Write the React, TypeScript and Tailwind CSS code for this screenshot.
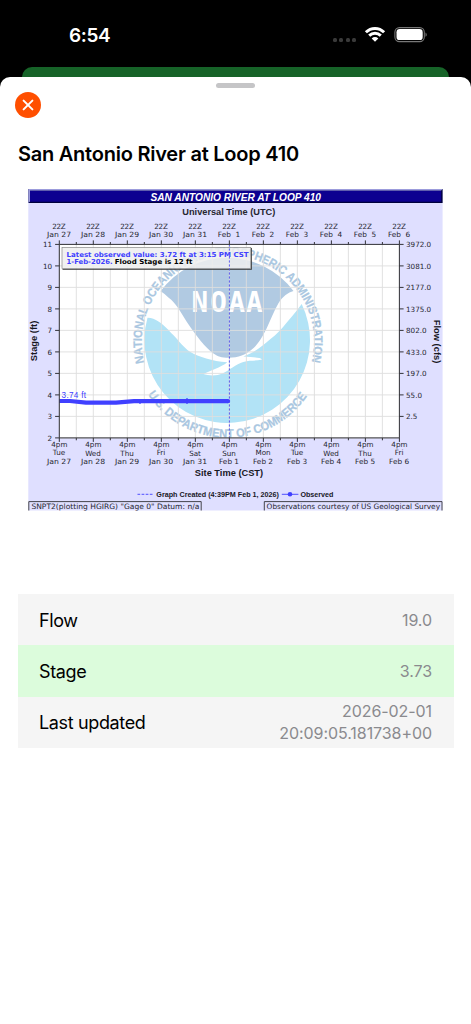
const TOP = 244.4;
const BOTTOM = 437.9;
const LEFT = 59.3;
const DAY = 34.01;
const FOOT = (BOTTOM - TOP) / 9;

const utcDates = ["Jan 27", "Jan 28", "Jan 29", "Jan 30", "Jan 31", "Feb  1", "Feb  2", "Feb  3", "Feb  4", "Feb  5", "Feb  6"];
const cstDates = ["Jan 27", "Jan 28", "Jan 29", "Jan 30", "Jan 31", "Feb 1", "Feb 2", "Feb 3", "Feb 4", "Feb 5", "Feb 6"];
const weekdays = ["Tue", "Wed", "Thu", "Fri", "Sat", "Sun", "Mon", "Tue", "Wed", "Thu", "Fri"];
const stages = [11, 10, 9, 8, 7, 6, 5, 4, 3, 2];
const flows = ["3972.0", "3081.0", "2177.0", "1375.0", "802.0", "433.0", "197.0", "55.0", "2.5"];

const rows = [
  { label: "Flow", value: ["19.0"], className: "bg-[#f5f5f5]" },
  { label: "Stage", value: ["3.73"], className: "bg-[#dcfcdc]" },
  { label: "Last updated", value: ["2026-02-01", "20:09:05.181738+00"], className: "bg-[#f5f5f5]" },
];

function StatusBar() {
  return (
    <div className="flex h-[67px] items-start justify-between pl-[69px] pr-[43px] text-white">
      <span className="mt-[23px] text-[19px] leading-[26px] font-semibold tracking-[-0.4px]">6:54</span>
      <div className="mt-[26px] flex items-start">
        <div className="mt-[12px] mr-[8px] flex gap-[2.4px]">
          {[0, 1, 2, 3].map((dot) => (
            <span key={dot} className="size-[4px] rounded-[1.5px] bg-[#3a3a3a]" />
          ))}
        </div>
        <svg className="mr-[8px] h-[17px] w-[22px]" viewBox="0 0 22 17" fill="none">
          <path d="M1.9 6.2C7.1 1.1 14.9 1.1 20.1 6.2" stroke="white" strokeWidth="3" />
          <path d="M5.2 9.6C8.5 6.4 13.5 6.4 16.8 9.6" stroke="white" strokeWidth="2.9" />
          <path d="M7.7 12.4C9.6 10.6 12.4 10.6 14.3 12.4L11 15.8Z" fill="white" />
        </svg>
        <svg className="h-[17px] w-[34px]" viewBox="0 0 34 17" fill="none">
          <rect x="0.9" y="1.6" width="29.4" height="14" rx="4.6" stroke="#777" strokeWidth="1.1" />
          <rect x="2.5" y="3.1" width="26.2" height="11" rx="3.2" fill="white" />
          <path d="M31.5 6.4C33.2 7.2 33.2 10 31.5 10.8Z" fill="#777" />
        </svg>
      </div>
    </div>
  );
}

function NoaaLogo() {
  return (
    <g>
      <path
        d="M160.5 291.3A82.8 82.8 0 0 1 293.5 291C288 292.5 283 296 278.3 303.5C274 311 271 319 266.7 328.3C262 338 258 344 253.3 348.3C246 355 238 357.8 229 357.8C221 357.6 218 356.5 213.5 353.5C205 347 197 337 186.7 321.7C180 311 175 302 169 298C166 295 163 293 160.5 291.3Z"
        fill="#b1cae2"
      />
      <path
        d="M147.5 317.7C151 317.5 155 319.2 158.5 321.5C166 326.5 168 330 173.3 335C179 341 184 348 190 351.7C199 357 212 361 227.3 362.3C224 365 220 367 215 369C211 371 207 372 203.3 374C209 376 217 376 222.5 373.5C229 370.5 236 364 243.3 362C250 360 256 361.2 262 359.6C261 357.5 254 357.2 243.3 356.4C252 353 257 350 263.3 345C272 338 278 333 283.3 326.7C289 320 295 313 301.7 304A82.8 82.8 0 1 1 147.5 317.7Z"
        fill="#b2e3f6"
      />
      <text x="191.4 210.2 228.6 246" y="312" fontSize="27.6" fill="white" fontFamily="DejaVu Sans Mono, monospace" fontWeight="700">
        NOAA
      </text>
      <path id="ring-top" d="M144.3 362.5A86.2 86.2 0 1 1 311.8 361.5" fill="none" />
      <path id="ring-bottom" d="M147.9 394.3A95.6 95.6 0 0 0 308.2 394.3" fill="none" />
      <g fill="#aac7e1" stroke="#aac7e1" strokeWidth="0.25" fontFamily="Liberation Sans, sans-serif" fontWeight="700" fontSize="12.2">
        <text textLength="312" lengthAdjust="spacingAndGlyphs">
          <textPath href="#ring-top" textLength="312" lengthAdjust="spacingAndGlyphs">NATIONAL OCEANIC AND ATMOSPHERIC ADMINISTRATION</textPath>
        </text>
        <text textLength="188" lengthAdjust="spacingAndGlyphs">
          <textPath href="#ring-bottom" textLength="188" lengthAdjust="spacingAndGlyphs">U.S. DEPARTMENT OF COMMERCE</textPath>
        </text>
      </g>
    </g>
  );
}

function Hydrograph() {
  const halfDays = Array.from({ length: 21 }, (_, i) => LEFT + (i * DAY) / 2);
  return (
    <svg className="ml-[28px] block h-[322px] w-[415px]" viewBox="28 189 415 322" fontFamily="DejaVu Sans, sans-serif" fontSize="7.2" fill="#262630">
      <rect x="28.3" y="189" width="414.3" height="321.5" fill="#dfdfff" />
      <rect x="28.3" y="189" width="414.3" height="14" fill="#00003c" />
      <path d="M28.3 203V189H442.6L441 190.8H30V201.5Z" fill="#9c9cdc" />
      <rect x="30" y="190.8" width="411.2" height="10.9" fill="#0c0090" />
      <text x="150.5" y="200.6" textLength="170.5" lengthAdjust="spacingAndGlyphs" fontSize="10" fontWeight="700" fontStyle="italic" fontFamily="Liberation Sans, sans-serif" fill="white">
        SAN ANTONIO RIVER AT LOOP 410
      </text>
      <text x="182.3" y="214.7" textLength="93" lengthAdjust="spacingAndGlyphs" fontSize="9.3" fontWeight="700" fontFamily="Liberation Sans, sans-serif">
        Universal Time (UTC)
      </text>

      <rect x={LEFT} y={TOP} width={DAY * 10} height={BOTTOM - TOP} fill="white" />
      <NoaaLogo />
      <g stroke="#dedede" strokeWidth="0.9">
        {halfDays.map((x) => (
          <path key={x} d={`M${x} ${TOP}V${BOTTOM}`} />
        ))}
        {stages.map((stage, i) => (
          <path key={stage} d={`M${LEFT} ${TOP + i * FOOT}H${LEFT + DAY * 10}`} />
        ))}
      </g>

      <path d="M62.5 269.2H251.3V248" fill="none" stroke="#333" strokeWidth="1.1" />
      <rect x="62" y="247.4" width="188.8" height="21.2" fill="#efefef" fillOpacity="0.85" stroke="#888" strokeWidth="0.7" />
      <g fontWeight="700" fontSize="6.9">
        <text x="66.6" y="256.6" textLength="182" lengthAdjust="spacingAndGlyphs" fill="#4040ff">Latest observed value: 3.72 ft at 3:15 PM CST</text>
        <text x="66.6" y="263.6" textLength="46" lengthAdjust="spacingAndGlyphs" fill="#4040ff">1-Feb-2026.</text>
        <text x="114.7" y="263.6" textLength="77.8" lengthAdjust="spacingAndGlyphs" fill="black">Flood Stage is 12 ft</text>
      </g>

      <path d={`M229.4 ${TOP}V${BOTTOM}`} stroke="#4a4aee" strokeWidth="0.9" strokeDasharray="2.2 1.8" />
      <path d="M59.3 401H70L86 402.7H116L134 401.2H228" fill="none" stroke="#4040ff" strokeWidth="4.2" strokeLinejoin="round" />
      <circle cx="228" cy="401.1" r="2.2" fill="#4040ff" />
      <path d="M140 401V404M187 398V404" stroke="#4040ff" strokeWidth="1.2" />
      <text x="61.6" y="398.3" textLength="24.4" fontFamily="Liberation Sans, sans-serif" fontSize="8.2" fill="#4040ff">3.74 ft</text>

      <g stroke="#333338" strokeWidth="1">
        <path d={`M${LEFT} ${TOP}H${LEFT + DAY * 10}V${BOTTOM}H${LEFT}Z`} fill="none" />
        {halfDays.map((x, i) => (
          <path key={x} d={`M${x} ${TOP}v${i % 2 ? -2.4 : -4}M${x} ${BOTTOM}v${i % 2 ? 2.4 : 4}`} />
        ))}
        {stages.map((stage, i) => (
          <path key={stage} d={`M${LEFT} ${TOP + i * FOOT}h-4.2${i < 9 ? `M${LEFT + DAY * 10} ${TOP + i * FOOT}h4.2` : ""}`} />
        ))}
      </g>

      <g textAnchor="middle">
        {utcDates.map((date, i) => (
          <g key={date}>
            <text x={LEFT - 0.3 + i * DAY} y="229.2" textLength="13.6">22Z</text>
            <text x={LEFT - 0.3 + i * DAY} y="237.4" textLength={i < 5 ? 24.2 : 22.4} lengthAdjust="spacingAndGlyphs" className="whitespace-pre">{date}</text>
          </g>
        ))}
        {cstDates.map((date, i) => (
          <g key={date}>
            <text x={LEFT + i * DAY} y="446.6" textLength="16.2">4pm</text>
            <text x={LEFT - 0.3 + i * DAY} y={["Tue", "Fri", "Mon"].includes(weekdays[i]) ? 454.8 : 456}>{weekdays[i]}</text>
            <text x={LEFT - 0.3 + i * DAY} y="464.2" textLength={i < 5 ? 24.2 : 20} lengthAdjust="spacingAndGlyphs">{date}</text>
          </g>
        ))}
      </g>
      {stages.map((stage, i) => (
        <text key={stage} x="52.2" y={TOP + i * FOOT + 2.6} textAnchor="end">{stage}</text>
      ))}
      {flows.map((flow, i) => (
        <text key={flow} x="406" y={TOP + i * FOOT + 2.6}>{flow}</text>
      ))}

      <g fontFamily="Liberation Sans, sans-serif" fontWeight="700" fontSize="9.3" fill="#18181f">
        <text transform="translate(37 361.2) rotate(-90)" textLength="40.5" lengthAdjust="spacingAndGlyphs">Stage (ft)</text>
        <text transform="translate(434.4 319.8) rotate(90)" textLength="43.5" lengthAdjust="spacingAndGlyphs">Flow (cfs)</text>
        <text x="194.8" y="475.6" textLength="68.3" lengthAdjust="spacingAndGlyphs">Site Time (CST)</text>
        <text x="156.3" y="496.8" textLength="122.6" lengthAdjust="spacingAndGlyphs" fontSize="7.4">Graph Created (4:39PM Feb 1, 2026)</text>
        <text x="300.4" y="496.8" textLength="33" lengthAdjust="spacingAndGlyphs" fontSize="7.4">Observed</text>
      </g>
      <path d="M137.5 494.3H152.5" stroke="#4040ff" strokeWidth="0.9" strokeDasharray="2.7 1.4" />
      <path d="M281.8 494.3H298.4" stroke="#4040ff" strokeWidth="0.9" />
      <circle cx="290" cy="494.3" r="2.3" fill="#4040ff" />
      <path d="M28.8 510.5V501.6H201.2V510.5M264.3 510.5V501.6H442V510.5" fill="none" stroke="#333338" strokeWidth="0.9" />
      <text x="31.4" y="508.9" textLength="168" fontSize="7.4" lengthAdjust="spacingAndGlyphs">SNPT2(plotting HGIRG) "Gage 0" Datum: n/a</text>
      <text x="266.6" y="508.9" textLength="173.4" fontSize="7.4" lengthAdjust="spacingAndGlyphs">Observations courtesy of US Geological Survey</text>
    </svg>
  );
}

export default function App() {
  return (
    <div className="flex h-[1024px] w-[471px] flex-col overflow-hidden bg-black font-['Inter',sans-serif]">
      <StatusBar />
      <div className="mx-[22px] h-[10px] shrink-0 rounded-t-[10px] bg-[#166328]" />
      <main className="flex-1 rounded-t-[10px] bg-white">
        <div className="flex h-[15px] justify-center pt-[6px]">
          <div className="h-[5px] w-[39px] rounded-full bg-[#c5c5c7]" />
        </div>
        <button aria-label="Close" className="ml-[15px] flex size-[26px] items-center justify-center rounded-full bg-[#ff4f00]">
          <svg className="size-[12px]" viewBox="0 0 12 12" fill="none" stroke="white" strokeWidth="2" strokeLinecap="round">
            <path d="M1.6 1.6L10.4 10.4M10.4 1.6L1.6 10.4" />
          </svg>
        </button>
        <h1 className="mt-[22px] ml-[18px] text-[20px] leading-[28px] font-semibold tracking-[-0.24px] whitespace-nowrap text-black">
          San Antonio River at Loop 410
        </h1>
        <div className="mt-[21px]">
          <Hydrograph />
        </div>
        <dl className="mx-[17.5px] mt-[83px]">
          {rows.map((row) => (
            <div key={row.label} className={`flex h-[51.3px] items-center justify-between px-[21.5px] pt-[1.5px] ${row.className}`}>
              <dt className="text-[18px] tracking-[-0.36px] text-black">{row.label}</dt>
              <dd className="text-right text-[16px] leading-[21.5px] tracking-[-0.07px] text-[#8a8a8e]">
                {row.value.map((line) => (
                  <div key={line}>{line}</div>
                ))}
              </dd>
            </div>
          ))}
        </dl>
      </main>
    </div>
  );
}
